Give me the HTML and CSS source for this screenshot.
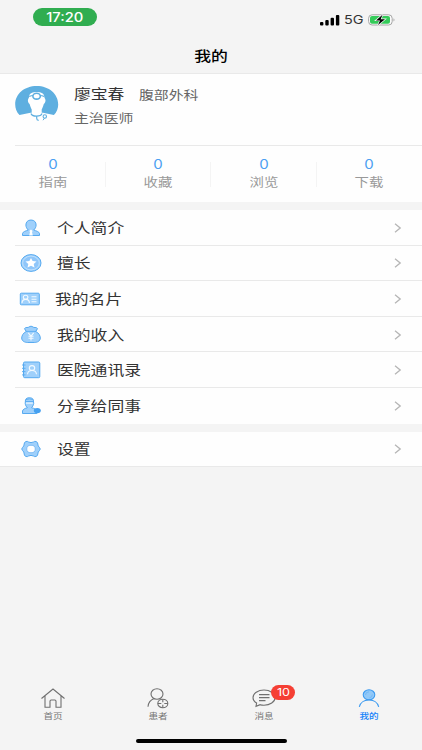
FILE: index.html
```html
<!DOCTYPE html>
<html lang="zh-CN">
<head>
<meta charset="utf-8">
<title>我的</title>
<link rel="stylesheet" href="styles.css">
</head>
<body>
<div class="app">
  <header class="header">
    <div class="status">
      <div class="time"><span class="wide">17:20</span></div>
      <div class="signals">
        <svg class="bars" width="20" height="11" viewBox="0 0 20 11"><rect x="0" y="7" width="3.4" height="3.4" rx="1"/><rect x="5.3" y="5" width="3.4" height="5.4" rx="1"/><rect x="10.6" y="2.8" width="3.4" height="7.6" rx="1"/><rect x="15.9" y="0" width="3.4" height="10.4" rx="1"/></svg>
        <span class="network wide">5G</span>
        <svg class="battery" width="28" height="12" viewBox="0 0 28 12"><rect x=".6" y=".8" width="23.6" height="10.2" rx="3.5" fill="#fafafa" stroke="#a6a6a6"/><rect x="2" y="2.1" width="20" height="7.6" rx="2" fill="#34cb59"/><path d="M25.5 4.2q2 1.7 0 3.4z" fill="#a6a6a6"/><path d="M14.5.8 8 6.4h4L10 11.1l7-5.9h-4.3z" fill="#000" stroke="#f4f4f4" stroke-width="1.4" paint-order="stroke"/></svg>
      </div>
    </div>
    <h1 class="title"><span class="wide">我的</span></h1>
  </header>

  <section class="profile">
    <svg class="avatar" width="44" height="38" viewBox="0 0 44 38">
      <path d="M4.500 29C1.500 25.800.2 22.300.2 18.400.2 8 9.400 0 21.700 0S43.200 8 43.200 18.400c0 3.900-1.300 7.400-4.300 10.600L28 26.700H15.500z" fill="#5eafe0"/>
      <path d="M14.200 10C14.500 4.500 28.900 4.500 29.200 10c.2 1.500.3 2 1 3 .9 2-.3 4.200-1.400 5-.7 2.500-1.500 4.300-2.100 5.500V29l-5 2-5-2v-5.500c-.6-1.200-1.400-3-2.100-5.500-1.100-.8-2.300-3-1.400-5 .7-1 .8-1.500 1-3z" fill="#fff"/>
      <path d="M14.200 10.500c1.500-.8 3-1 4.500-1M24.700 9.500c1.500 0 3 .2 4.500 1" fill="none" stroke="#5eafe0" stroke-width="1.200"/>
      <ellipse cx="21.600" cy="10.200" rx="3.700" ry="2.900" fill="#fff" stroke="#5eafe0" stroke-width="1.600"/>
      <path d="M16 27.500c.8 3.500 10 3.500 11 0M21.700 30.200v2q0 2 2 2.200" fill="none" stroke="#5eafe0" stroke-width="1.200"/>
      <circle cx="29.800" cy="30.500" r="1.700" fill="#fff" stroke="#5eafe0" stroke-width="1.100"/><path d="M29.500 32.200 28 34.200" stroke="#5eafe0"/>
    </svg>
    <div class="who">
      <div class="line"><span class="name wide">廖宝春</span><span class="dept wide">腹部外科</span></div>
      <div class="line"><span class="rank wide">主治医师</span></div>
    </div>
  </section>

  <section class="stats">
    <div class="stat"><b class="wide">0</b><span class="wide">指南</span></div>
    <div class="stat"><b class="wide">0</b><span class="wide">收藏</span></div>
    <div class="stat"><b class="wide">0</b><span class="wide">浏览</span></div>
    <div class="stat"><b class="wide">0</b><span class="wide">下载</span></div>
  </section>

  <nav class="menu">
    <a class="row"><svg class="icon" viewBox="0 0 22 20"><path d="M11 2c3.400 0 5.100 2.300 5.100 5 0 2-1 3.800-2.400 5 2.500 1 5.300 1.500 5.800 3.500v2H2.500v-2c.5-2 3.300-2.500 5.800-3.500C6.900 10.800 5.900 9 5.900 7c0-2.700 1.700-5 5.100-5z"/><path class="white" d="m11 11.500 1.700 1.500-.7 1 .8 3.500H9.200L10 14l-.7-1z"/></svg><span class="wide">个人简介</span><svg class="arrow" viewBox="0 0 8 10"><path d="m1 .8 5.200 4.200L1 9.200"/></svg></a>
    <a class="row"><svg class="icon" viewBox="0 0 22 20"><ellipse cx="11" cy="10" rx="10" ry="8.400"/><ellipse cx="11" cy="10" rx="8.300" ry="6.900" class="ring"/><path class="white" d="m11 5 1.600 3.100 3.900.4-2.800 2.500.8 3.500-3.500-1.800-3.500 1.800.8-3.500-2.800-2.500 3.900-.4z"/></svg><span class="wide">擅长</span><svg class="arrow" viewBox="0 0 8 10"><path d="m1 .8 5.200 4.200L1 9.200"/></svg></a>
    <a class="row card"><svg class="icon" viewBox="0 0 22 20"><rect x="1.300" y="4.200" width="19" height="11.600" rx="1"/><g class="line-art"><ellipse cx="6.600" cy="8.300" rx="2.300" ry="2"/><path d="M3 14c.2-4.800 7.200-4.800 7.400 0M12.500 7.700h5M12.500 10.200h5M12.500 12.700h5"/></g></svg><span class="wide">我的名片</span><svg class="arrow" viewBox="0 0 8 10"><path d="m1 .8 5.200 4.200L1 9.200"/></svg></a>
    <a class="row"><svg class="icon" viewBox="0 0 22 20"><path d="M6.200 6.500 4.500 3.600C6 1.500 8 3.200 9 2c1.200-1 2.800-1 4 0 1 1.200 3-.5 4.500 1.600l-1.700 2.900c3 1.500 4.500 4.200 4.500 6.500 0 3-3 4.500-6 4.500H7.700c-3 0-6-1.500-6-4.500 0-2.300 1.500-5 4.500-6.500z"/><path class="fine" d="M6 6.400h10"/><path class="line-art" d="m8.300 7.800 2.700 3.300 2.700-3.300M11 11v4.500M8.500 11.200h5M8.500 13.200h5"/></svg><span class="wide">我的收入</span><svg class="arrow" viewBox="0 0 8 10"><path d="m1 .8 5.200 4.200L1 9.200"/></svg></a>
    <a class="row"><svg class="icon" viewBox="0 0 22 20"><rect x="3.500" y="2" width="16.300" height="15.700" rx="1.200"/><path class="fine" d="M2 5h3.500M2 8.300h3.500M2 11.600h3.500M2 14.900h3.500"/><g class="line-art"><ellipse cx="12" cy="8" rx="2.700" ry="2.400"/><path d="M7.500 14.300c.5-5 8.500-5 9 0"/></g></svg><span class="wide">医院通讯录</span><svg class="arrow" viewBox="0 0 8 10"><path d="m1 .8 5.200 4.200L1 9.200"/></svg></a>
    <a class="row"><svg class="icon" viewBox="0 0 22 20"><path d="M5.500 3.800C6.300 1 12.500 1 13.300 3.800l.4 3.700c-.4 2-1.200 3.300-2.200 4.200 2.600.7 5 1.500 5.400 3.300V17.500H2.500V15c.4-1.800 2.500-2.600 4.900-3.300-1-.9-1.900-2.200-2.200-4.200z"/><path class="fine" d="M5.300 5.500h8.200M6 3.500q3.400-1.200 6.800 0"/><path class="line-art" d="M6 7.100h6.800"/><ellipse class="solid" cx="17.300" cy="14.600" rx="3.500" ry="2.600"/></svg><span class="wide">分享给同事</span><svg class="arrow" viewBox="0 0 8 10"><path d="m1 .8 5.200 4.200L1 9.200"/></svg></a>
  </nav>

  <nav class="menu settings">
    <a class="row"><svg class="icon" viewBox="0 0 22 20"><path d="M6 2.500Q7.500 2 8.500 3q2.500 1.200 5 0 1-1 2.500-.5 2 .8 1.800 2.500 0 2.300 1.700 3.500 1.500 1.500 0 3-1.700 1.200-1.700 3.500.2 1.700-1.800 2.500-1.500.5-2.500-.5-2.500-1.200-5 0-1 1-2.500.5-2-.8-1.800-2.500 0-2.300-1.700-3.500-1.500-1.500 0-3Q4.200 7.300 4.200 5 4 3.300 6 2.500z"/><ellipse class="hole" cx="11" cy="10" rx="4.300" ry="3.800"/></svg><span class="wide">设置</span><svg class="arrow" viewBox="0 0 8 10"><path d="m1 .8 5.200 4.200L1 9.200"/></svg></a>
  </nav>

  <footer class="tabs">
    <a class="tab"><svg viewBox="0 0 26 22"><path d="M1.500 11.500 13 2l11.500 9.500M5 9v11.200h5v-6q0-1.200 1.200-1.200h3.600q1.200 0 1.200 1.200v6h5V9"/></svg><span class="wide">首页</span></a>
    <a class="tab"><svg viewBox="0 0 26 22"><ellipse cx="12" cy="7" rx="6" ry="5.300"/><path d="M3 19.800c.3-4.200 2.500-6.800 6.200-8.200"/><ellipse cx="17.800" cy="16.500" rx="5" ry="4.300"/><path d="M12.800 16.500h3.500m3 0h3.500M17.800 12.200v3m0 2.600v3"/></svg><span class="wide">患者</span></a>
    <a class="tab"><svg viewBox="0 0 26 22"><path d="M5 19.300 5.600 16C3.300 14.700 2 12.800 2 10.700 2 6.400 7 3 13 3s11 3.400 11 7.700-5 7.500-11 7.500c-1.300 0-2.600-.1-3.800-.5z"/><path class="text-lines" d="M8 7.700h10.500M8 10.700h10.500M8 13.600h6.500"/></svg><i class="badge"><span class="wide">10</span></i><span class="wide">消息</span></a>
    <a class="tab active"><svg viewBox="0 0 26 22"><ellipse class="head" cx="13" cy="7.800" rx="5.800" ry="5"/><path d="M3.300 19.800c2.200-9.200 17.200-9.200 19.400 0"/><path class="shine" d="M9.500 8q0-3 3.500-3.200M16.300 7.500q.2 2.800-2.800 3.300"/></svg><span class="wide">我的</span></a>
  </footer>
  <div class="home-bar"></div>
</div>
</body>
</html>
```
FILE: styles.css
```css
* { box-sizing: border-box; }

body {
  margin: 0;
  background: #f4f4f4;
  font-family: Inter, "Noto Sans CJK SC", sans-serif;
  color: #333;
}

.app {
  width: 422px;
  height: 750px;
  display: flex;
  flex-direction: column;
  overflow: hidden;
}

.wide {
  display: inline-block;
  white-space: nowrap;
  transform: scaleX(1.2);
  transform-origin: left center;
}

.header {
  height: 74px;
  flex: none;
  border-bottom: 1px solid #e9e9e9;
}

.status {
  display: flex;
  justify-content: space-between;
  padding: 8px 26px 0 33px;
  height: 44px;
}

.time {
  width: 64px;
  height: 18px;
  border-radius: 9px;
  background: #30ad50;
  color: #fff;
  font-size: 12.5px;
  font-weight: 500;
  line-height: 19px;
  text-align: center;
}

.time .wide, .title .wide, .stat .wide, .tab .wide { transform-origin: center; }

.time .wide { transform: scaleX(1.18); }

.signals {
  display: flex;
  align-items: center;
  height: 24px;
}

.network {
  width: 20px;
  margin: 0 4px 0 4px;
  font-size: 12px;
  font-weight: 400;
  line-height: 24px;
}

.title {
  margin: 0;
  color: #000;
  font-size: 14px;
  font-weight: 500;
  line-height: 24px;
  text-align: center;
}

.profile {
  display: flex;
  height: 71px;
  flex: none;
  padding: 12px 0 0 15px;
  background: #fefefe;
}

.who { margin: -3px 0 0 15px; }

.line {
  display: flex;
  align-items: center;
  height: 23px;
}

.name {
  width: 65px;
  font-size: 14px;
  line-height: 19px;
  padding-bottom: 2px;
}

.dept, .rank {
  font-size: 12.4px;
  color: #666;
}

.stats {
  display: flex;
  height: 57px;
  flex: none;
  background: linear-gradient(#e9e9e9, #e9e9e9) 15px 0 / 100% 1px no-repeat #fefefe;
}

.stat {
  flex: 1;
  display: flex;
  flex-direction: column;
  align-items: center;
  padding-top: 10px;
  background: linear-gradient(#f4f4f4, #f4f4f4) right 17px / 1px 25px no-repeat;
}

.stat:last-child { background: none; }

.stat b {
  color: #4c9ff2;
  font-size: 12.5px;
  font-weight: 400;
  line-height: 19px;
}

.stat span {
  color: #999;
  font-size: 12px;
  line-height: 18px;
}

.menu {
  margin-top: 8px;
  flex: none;
  background: #fefefe;
}

.row {
  display: flex;
  align-items: center;
  height: 35.6px;
  padding: 0 20px;
  font-size: 14px;
  background: linear-gradient(#e9e9e9, #e9e9e9) 15px 100% / 100% 1px no-repeat;
}

.menu .row:last-child { background: none; }
.settings .row:last-child { border-bottom: 1px solid #e9e9e9; }

.row .wide {
  margin-left: 15px;
  line-height: 20px;
}

.row.card .wide { margin-left: 14px; }
.row.card .icon { margin-left: -1px; }

.icon {
  width: 22px;
  height: 20px;
  fill: #9fd0fb;
  stroke: #57aaf0;
  stroke-width: 1;
}

.icon .ring { fill: #8fc6fa; stroke: #c8e4fd; stroke-width: .8; }
.icon .white { fill: #fff; stroke: none; }
.icon .line-art { fill: none; stroke: #f3faff; stroke-width: 1.1; }
.icon .fine { fill: none; stroke: #57aaf0; stroke-width: .9; }
.icon .solid { fill: #45a0f0; stroke: none; }
.icon .hole { fill: #fff; stroke: #7fbdf6; }

.arrow {
  width: 8px;
  height: 10px;
  margin-left: auto;
  fill: none;
  stroke: #b5b5b5;
  stroke-width: 1.3;
}

.tabs {
  display: flex;
  height: 52px;
  flex: none;
  margin-top: auto;
}

.tab {
  position: relative;
  flex: 1;
  display: flex;
  flex-direction: column;
  align-items: center;
  color: #777;
  font-size: 8px;
  line-height: 14px;
}

.tab svg {
  width: 26px;
  height: 22px;
  fill: none;
  stroke: #707070;
  stroke-width: 1.1;
}

.tab .text-lines { stroke-width: 1.3; }
.tab.active { color: #1683fa; font-weight: 500; }
.tab.active svg { stroke: #3b9af0; }
.tab .head { fill: #92c9f8; }
.tab .shine { stroke: #6bb4f5; stroke-width: .8; }

.badge {
  position: absolute;
  left: 60px;
  top: -2px;
  width: 24px;
  height: 15px;
  border-radius: 8px;
  background: #f53f34;
  color: #fff;
  font-size: 10.5px;
  font-style: normal;
  font-weight: 400;
  line-height: 15px;
  text-align: center;
}

.home-bar {
  width: 151px;
  height: 4px;
  flex: none;
  margin: 0 auto 7px;
  border-radius: 2px;
  background: #000;
}
```
